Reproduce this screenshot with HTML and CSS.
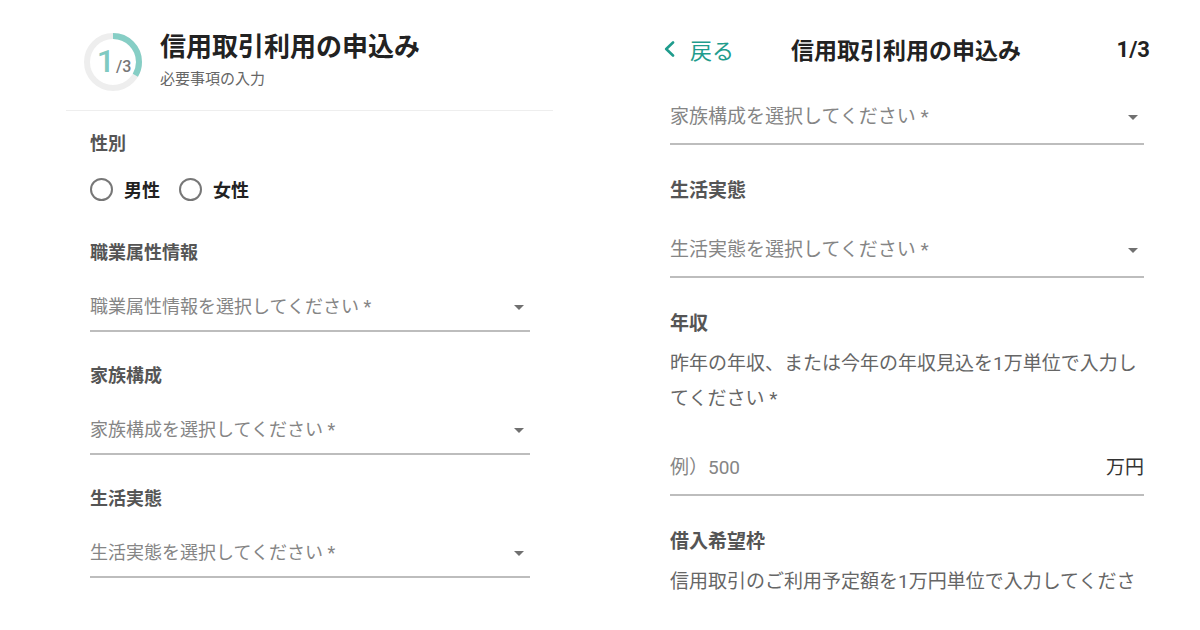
FILE: index.html
```html
<!DOCTYPE html>
<html lang="ja">
<head>
<meta charset="utf-8">
<title>信用取引利用の申込み</title>
<link rel="stylesheet" href="styles.css">
</head>
<body>
<div class="page">
  <section class="pane pane-left">
    <header class="step-head">
      <div class="ring">
        <svg class="ring-svg" viewBox="0 0 58 58" width="58" height="58">
          <circle cx="29" cy="29" r="26" fill="none" stroke="#eeeeee" stroke-width="6"/>
          <circle cx="29" cy="29" r="26" fill="none" stroke="#86cec5" stroke-width="6" stroke-dasharray="54.45 200" transform="rotate(-90 29 29)"/>
        </svg>
        <div class="ring-label"><span class="ring-num">1</span><span class="ring-total">/3</span></div>
      </div>
      <div class="head-text">
        <h1 class="head-title">信用取引利用の申込み</h1>
        <p class="head-sub">必要事項の入力</p>
      </div>
    </header>
    <div class="form form-left">
      <div class="field field-radio">
        <div class="label">性別</div>
        <div class="radios">
          <label class="radio"><span class="radio-dot"></span>男性</label>
          <label class="radio"><span class="radio-dot"></span>女性</label>
        </div>
      </div>
      <div class="field">
        <div class="label">職業属性情報</div>
        <div class="select"><span>職業属性情報を選択してください *</span><span class="caret"></span></div>
      </div>
      <div class="field">
        <div class="label">家族構成</div>
        <div class="select"><span>家族構成を選択してください *</span><span class="caret"></span></div>
      </div>
      <div class="field">
        <div class="label">生活実態</div>
        <div class="select"><span>生活実態を選択してください *</span><span class="caret"></span></div>
      </div>
    </div>
  </section>

  <section class="pane pane-right">
    <header class="nav">
      <a class="back">
        <svg class="chev" viewBox="0 0 11 16" width="11" height="16"><path d="M9 1.5 L2.2 8 L9 14.5" fill="none" stroke="#1f9c8d" stroke-width="2.6" stroke-linecap="round" stroke-linejoin="round"/></svg>
        <span>戻る</span>
      </a>
      <div class="nav-title">信用取引利用の申込み</div>
      <div class="nav-step">1/3</div>
    </header>
    <div class="form form-right">
      <div class="select select-r select-first"><span>家族構成を選択してください *</span><span class="caret"></span></div>
      <div class="field-r">
        <div class="label label-r">生活実態</div>
        <div class="select select-r"><span>生活実態を選択してください *</span><span class="caret"></span></div>
      </div>
      <div class="field-r">
        <div class="label label-r">年収</div>
        <p class="desc">昨年の年収、または今年の年収見込を1万単位で入力してください *</p>
        <div class="input-row"><span class="ph">例）500</span><span class="unit">万円</span></div>
      </div>
      <div class="field-r">
        <div class="label label-r">借入希望枠</div>
        <p class="desc">信用取引のご利用予定額を1万円単位で入力してください *</p>
      </div>
    </div>
  </section>
</div>
</body>
</html>
```

FILE: styles.css
```css
* { box-sizing: border-box; }
body {
  margin: 0;
  background: #fff;
  font-family: Roboto, "Noto Sans CJK JP", sans-serif;
}
.page {
  display: flex;
  align-items: flex-start;
  width: 1200px;
  height: 630px;
  overflow: hidden;
}
.pane-left {
  margin-left: 66px;
  width: 487px;
  flex: none;
}
.step-head {
  display: flex;
  align-items: flex-start;
  gap: 18px;
  padding: 33px 0 19px 18px;
  border-bottom: 1px solid #eeeeee;
}
.ring {
  display: grid;
  width: 58px;
  height: 58px;
  flex: none;
}
.ring-svg, .ring-label { grid-area: 1 / 1; }
.ring-label {
  display: flex;
  align-items: baseline;
  justify-content: center;
  padding-top: 12px;
  padding-left: 2px;
}
.ring-num {
  font-size: 32px;
  line-height: 32px;
  color: #7fcac1;
  font-weight: 500;
}
.ring-total {
  font-size: 16px;
  color: #777;
  font-weight: 500;
  margin-left: 1px;
}
.head-text { margin-top: -1px; }
.head-title {
  margin: 0;
  font-size: 26px;
  line-height: 30px;
  font-weight: 700;
  color: #222;
}
.head-sub {
  margin: 7px 0 0;
  font-size: 15px;
  line-height: 20px;
  color: #666;
}
.form-left { padding: 20px 23px 0 24px; }
.label {
  font-size: 18px;
  line-height: 26px;
  font-weight: 700;
  color: #555;
}
.field { margin-bottom: 31px; }
.field-radio { margin-bottom: 38px; }
.radios {
  display: flex;
  align-items: center;
  gap: 19px;
  height: 26px;
  margin-top: 19px;
}
.radio {
  display: flex;
  align-items: center;
  gap: 11px;
  font-size: 18px;
  font-weight: 700;
  color: #222;
}
.radio-dot {
  width: 23px;
  height: 23px;
  border: 2px solid #777;
  border-radius: 50%;
}
.select {
  display: flex;
  align-items: center;
  justify-content: space-between;
  margin-top: 28px;
  padding-bottom: 10px;
  border-bottom: 2px solid #bdbdbd;
  font-size: 18px;
  line-height: 26px;
  color: #858585;
}
.caret {
  width: 0;
  height: 0;
  border-left: 5px solid transparent;
  border-right: 5px solid transparent;
  border-top: 5px solid #707070;
  margin-right: 6px;
}

.pane-right {
  margin-left: 109px;
  width: 488px;
  height: 600px;
  overflow: hidden;
  flex: none;
}
.nav {
  display: grid;
  grid-template-columns: 1fr auto 1fr;
  align-items: center;
  height: 40px;
  margin-top: 29px;
}
.back {
  display: flex;
  align-items: center;
  gap: 15px;
  color: #1f9c8d;
  font-size: 22px;
  padding-left: 2px;
}
.chev { display: block; }
.nav-title {
  font-size: 23px;
  font-weight: 700;
  color: #222;
}
.nav-step {
  justify-self: end;
  font-size: 22px;
  font-weight: 700;
  color: #222;
}
.form-right { padding: 0 6px 0 8px; }
.select-r {
  font-size: 19px;
  line-height: 28px;
  padding-bottom: 12px;
  margin-top: 31px;
}
.select-first { margin-top: 34px; }
.field-r { margin-top: 32px; }
.label-r {
  font-size: 19px;
  line-height: 28px;
}
.desc {
  margin: 8px 0 0;
  font-size: 19px;
  line-height: 35px;
  color: #666;
}
.input-row {
  display: flex;
  justify-content: space-between;
  align-items: center;
  margin-top: 38px;
  padding-bottom: 12px;
  border-bottom: 2px solid #bdbdbd;
  font-size: 19px;
  line-height: 28px;
}
.ph { color: #858585; }
.unit { color: #333; }
```
